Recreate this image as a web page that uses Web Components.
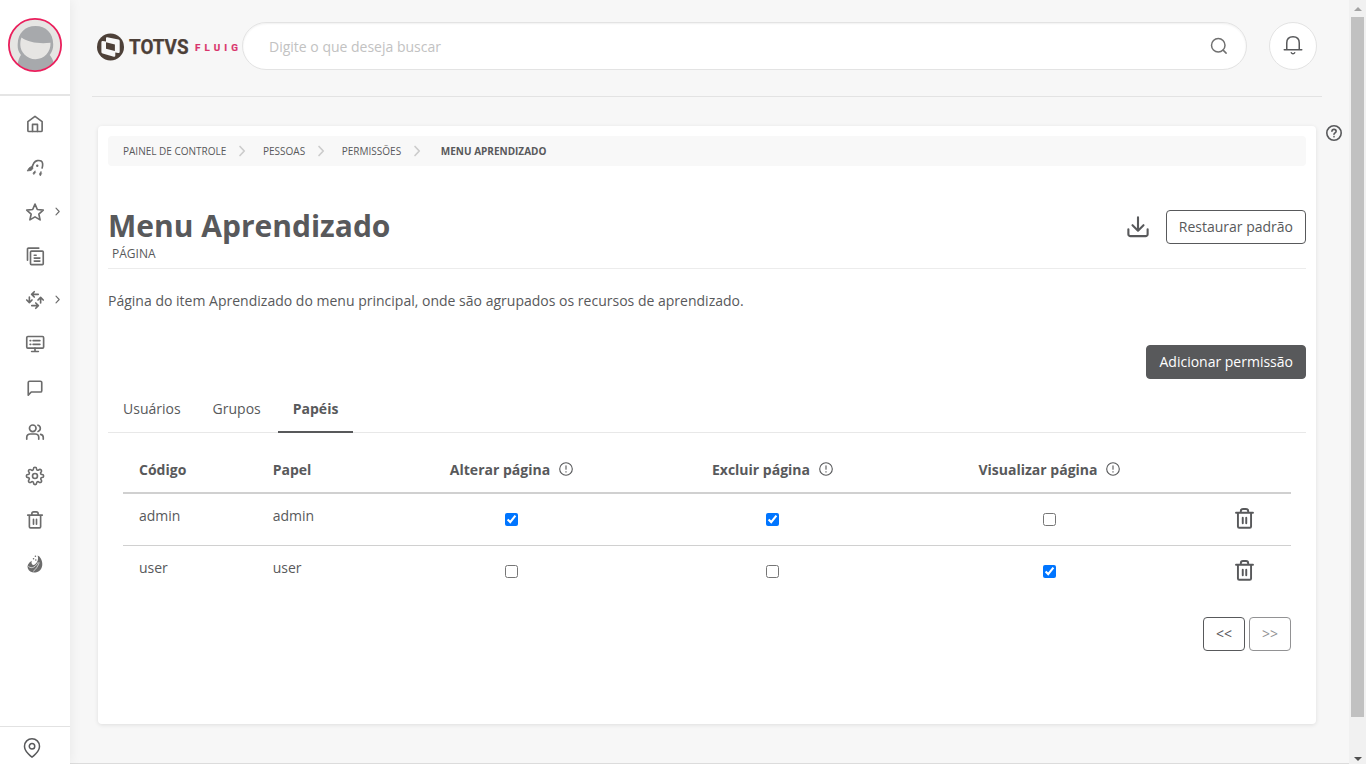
<!DOCTYPE html>
<html lang="pt-BR">
<head>
<meta charset="utf-8">
<title>Menu Aprendizado</title>
<style>
html,body{margin:0;height:100%;overflow:hidden}
body{font:14px/20px "Open Sans","Noto Sans",sans-serif;color:#58595b;background:#f7f7f7}
</style>
</head>
<body>
<fl-app></fl-app>
<script>
const define = (name, css, html) => customElements.define(name, class extends HTMLElement {
  constructor() {
    super();
    this.attachShadow({mode: 'open'}).innerHTML =
      `<style>*{box-sizing:border-box}${css}</style>` + (typeof html === 'function' ? html(this) : html);
  }
});

/* Icons are drawn on a 24-unit grid */
const ICONS = {
  home: '<path d="M2.500 8.800 12 1.800l9.500 7V20.500a1.500 1.500 0 0 1-1.500 1.500H4A1.500 1.500 0 0 1 2.500 20.500z"/><path d="M8.700 22v-9.500h6.600V22"/>',
  rocket: '<path d="M8 12.500C9 7 11 3 15 2.200c4.500-.8 7 .8 7.200 4.300.1 2-.1 3.800-.7 5.500"/><path d="M8 9.500 4.200 11.800 1.500 16l5.500-.8 1.800-2.200z" fill="currentColor" stroke-width="1"/><circle cx="15" cy="9" r="1.600" fill="currentColor" stroke="none"/><path d="m11.800 16-2.600 2.800 1.200 2 2.200-2.600zM19.800 16.800l-2 3.200 1.300 2.700 1.600-3z" fill="currentColor" stroke-width=".8"/>',
  star: '<path d="m12 1.500 3.100 7.200 7.900.8-5.900 5.200 1.700 7.800L12 18.500l-6.800 4 1.700-7.800L1 9.500l7.900-.8z"/>',
  copy: '<path d="M2 17.500V2.800A1.300 1.300 0 0 1 3.300 1.500H17"/><rect x="6" y="5.500" width="17" height="18" rx="1.300"/><path d="M11 11h2.500M11 14.800h7.500M11 18.800h7.500"/>',
  arrows: '<path d="M7.500 4.500h8.800M11 1 7.500 4.500 11 8M19.500 9v7M16 12l3.500-3.500L23 12M16.500 19.500H7.700M13 16l3.500 3.500L13 23M4.500 8v7.500M1 12l3.500 3.500L8 12"/>',
  monitor: '<rect x="1" y="2" width="22.500" height="15.500" rx="1.500"/><path d="M12 17.500V21M7.500 22h9M5.500 7.500h.8M9.500 7.500h9M5.500 12.500h.8M9.500 12.500h9"/>',
  chat: '<path d="M3 21.500V4.800A1.800 1.800 0 0 1 4.800 3h14.400A1.800 1.800 0 0 1 21 4.800v10.700a1.800 1.800 0 0 1-1.800 1.800H7z"/>',
  users: '<g transform="translate(0 .6)"><circle cx="9" cy="6.500" r="4.400"/><path d="M1 21v-2.500a4.500 4.500 0 0 1 4.500-4.500h7a4.500 4.500 0 0 1 4.500 4.500V21M16 2.300a4.400 4.400 0 0 1 0 8.400M19.500 14.500c2.500.6 3.500 2 3.500 4V21"/></g>',
  gear: '<circle cx="12" cy="12" r="3.300"/><path d="M19.400 15a1.650 1.650 0 0 0 .33 1.820l.06.06a2 2 0 1 1-2.830 2.830l-.06-.06a1.650 1.650 0 0 0-2.800 1.170V21a2 2 0 0 1-4 0v-.09a1.650 1.650 0 0 0-2.880-1.260l-.06.06a2 2 0 1 1-2.830-2.830l.06-.06a1.650 1.650 0 0 0-1.170-2.800H3a2 2 0 0 1 0-4h.09a1.650 1.650 0 0 0 1.260-2.880l-.06-.06a2 2 0 1 1 2.830-2.830l.06.06A1.650 1.650 0 0 0 10 3.170V3a2 2 0 0 1 4 0v.09a1.650 1.650 0 0 0 2.800 1.170l.06-.06a2 2 0 1 1 2.830 2.830l-.06.06A1.650 1.650 0 0 0 20.830 10H21a2 2 0 0 1 0 4h-.09a1.650 1.650 0 0 0-1.510 1z" transform="translate(-.6 -.6) scale(1.050)" stroke-width="2"/>',
  trash: '<path d="M2.300 5.500h19.400M4.500 6v15a1.500 1.500 0 0 0 1.500 1.500h12a1.500 1.500 0 0 0 1.500-1.500V6M7.800 5.500V3.700a2.500 2.500 0 0 1 2.500-2.500h3.400a2.500 2.500 0 0 1 2.500 2.500v1.800M10 11v6.500M14 11v6.500"/>',
  flame: '<path d="M7.500 7.500C3 10.500 1 14 2.500 18c1.500 4.500 7 6.500 11.500 5 5.500-1.700 8.700-7 7.500-13.500C20.700 5.500 19 2 15.500.5c1.500 5 .2 8-3 11.500-2.300 2.500-6 1.500-5-4.500z" fill="currentColor" stroke="none"/><path d="M3.500 15.500c4.500 4 10-.5 12.500-5.500M10 21.500c4-3 6-7 7.500-11" stroke="#fff" stroke-width=".9"/><path d="M12.500 1.500h.1M10 5h.1M13 6.500h.1" stroke-width="2"/>',
  pin: '<path d="M12 23S3 16.800 3 9.800a9 9 0 0 1 18 0C21 16.800 12 23 12 23z"/><circle cx="12" cy="10" r="3.300"/>',
  search: '<circle cx="11" cy="11" r="9"/><path d="m17.500 17.500 4 4"/>',
  bell: '<path d="M1.500 17.700h21M4.500 17.500V9.500C4.500 4.800 7.500 2 12 2s7.500 2.800 7.500 7.500v8"/><path d="M10 21.300c.8 1.400 3.200 1.400 4 0"/>',
  help: '<circle cx="12" cy="12" r="10.800"/><path d="M8.900 9.400C9 7.300 10.400 6.500 12 6.500c1.800 0 3.200 1.100 3.200 2.700 0 2.500-3.200 2.500-3.200 4.800M12 17.500v.3"/>',
  down: '<path d="M1.500 14.500v5.300A2.200 2.200 0 0 0 3.700 22h16.600a2.200 2.200 0 0 0 2.200-2.200v-5.300M12 1.500v14M6 10l6 6 6-6"/>',
  info: '<circle cx="12" cy="12" r="10.800"/><path d="M12 6.500v6M12 16.500v.8"/>',
  next: '<path d="m8 3 8.500 9L8 21"/>'
};
define('fl-icon', ':host{display:inline-block;flex:none;width:var(--s,18px);height:var(--s,18px)}svg{display:block;width:100%;height:100%;fill:none;stroke:currentColor;stroke-width:var(--w,2);stroke-linecap:round;stroke-linejoin:round;overflow:visible}',
  e => `<svg viewBox="0 0 24 24">${ICONS[e.getAttribute('name')]}</svg>`);

define('fl-avatar', ':host{display:block;width:54px;height:54px}svg{display:block}',
  `<svg width="54" height="54" viewBox="0 0 54 54"><defs><clipPath id="c"><circle cx="27" cy="27" r="25.500"/></clipPath></defs>
  <circle cx="27" cy="27" r="26" fill="#e6e5e3"/><g clip-path="url(#c)"><path d="M9 54C9 48 10 41 13 37 10 33 9.500 30 9.700 26 10 15 17 8 27.500 8S45 15 45.200 26c.1 4-.5 7-3.500 11 4 5 5 10 5 17z" fill="#a7a9ac"/><path d="M13.500 19.500c7 5.300 18 6.300 29 5.300C43 34 36 41.200 27.500 41.200S12.300 34 12.300 27c0-3 .2-5 1.200-7.500z" fill="#e6e5e3"/></g><circle cx="27" cy="27" r="26.100" fill="none" stroke="#ea1f5c" stroke-width="1.800"/></svg>`);

define('fl-nav-item', ':host{display:grid;grid-template-columns:26px 18px 9px 9px;align-items:center;height:44px;color:#6c6c6c;--w:2.200}fl-icon{grid-column:2}.n{grid-column:4;--s:9px;--w:3;margin-top:-2px}',
  e => `<fl-icon name="${e.getAttribute('icon')}"></fl-icon>${e.hasAttribute('more') ? '<fl-icon class="n" name="next"></fl-icon>' : ''}`);

define('fl-sidebar', ':host{display:flex;flex-direction:column;background:#fff;box-shadow:0 0 12px rgba(0,0,0,.07);z-index:1}header{height:96px;padding:18px 8px;border-bottom:2px solid #e5e5e5}nav{flex:1;padding-top:6.400px}footer{height:38px;border-top:1px solid #e2e2e2;padding:11px 22px;color:#58595b}footer fl-icon{--s:20px;--w:1.800}',
  '<header><fl-avatar></fl-avatar></header><nav>' +
  ['home','rocket','star','copy','arrows','monitor','chat','users','gear','trash','flame'].map(i =>
    `<fl-nav-item icon="${i}"${i === 'star' || i === 'arrows' ? ' more' : ''}></fl-nav-item>`).join('') +
  '</nav><footer><fl-icon name="pin"></fl-icon></footer>');

define('fl-logo', ':host{display:block;width:141.500px;height:28px;margin-top:2px}svg{display:block;overflow:visible}text{font-family:Roboto,sans-serif;font-weight:700}',
  `<svg width="141" height="28"><circle cx="13.500" cy="14" r="13.500" fill="#4d4038"/>
  <path d="M9 5.200q0-1.200 1.200-1L21.500 6.500q1.200.3 1.200 1.500v10.800q0 1.500-1.500 1.200L18.300 19.500v3q0 1.500-1.500 1.200L5.700 20.600q-1.300-.4-1.300-1.600V9.300q0-1.500 1.400-1.300L9 8.600z" fill="#f7f7f7"/>
  <path d="M9 9.300l8.900 2.200v6.500L9 15.800z" fill="#4d4038"/>
  <text x="32" y="20.800" font-size="19.300" textLength="59.500" lengthAdjust="spacingAndGlyphs" fill="#4d4038" stroke="#4d4038" stroke-width=".25">TOTVS</text><text x="98" y="18" font-size="9.800" textLength="43" fill="#d9346c" stroke="#d9346c" stroke-width=".2">FLUIG</text></svg>`);

define('fl-header', ':host{display:flex;align-items:center;height:97px;margin:0 27px 0 22px;padding:0 5px 5px;border-bottom:1px solid #e3e3e3}.s{display:flex;align-items:center;justify-content:space-between;width:1005px;height:48px;margin-left:3.500px;padding:0 18px 0 26px;border:1px solid #e3e3e3;border-radius:24px;background:#fff;color:#c2c2c2;box-shadow:inset 0 1px 2px rgba(0,0,0,.06)}.s span{padding-top:2px}.s fl-icon{color:#707070;--w:2}.b{display:grid;place-items:center;width:48px;height:48px;margin-left:22px;border:1px solid #e3e3e3;border-radius:50%;background:#fff}.b fl-icon{--s:20px;--w:1.800;margin-top:-1px}',
  '<fl-logo></fl-logo><div class="s"><span>Digite o que deseja buscar</span><fl-icon name="search"></fl-icon></div><div class="b"><fl-icon name="bell"></fl-icon></div>');

define('fl-breadcrumb', ':host{display:flex;align-items:center;height:30px;padding-left:15px;border-radius:4px;background:#f8f8f8;font-size:10px}fl-icon{--s:12px;--w:3.400;color:#ccc;margin:-1px 15px 0 9.700px}.l{margin-right:18px}b{font-weight:700}',
  '<span>PAINEL DE CONTROLE</span><fl-icon name="next"></fl-icon><span>PESSOAS</span><fl-icon name="next"></fl-icon><span>PERMISSÕES</span><fl-icon class="l" name="next"></fl-icon><b>MENU APRENDIZADO</b>');

define('fl-button', ':host{display:inline-flex;align-items:center;justify-content:center;height:34px;padding:0 12px;border:1px solid #58595b;border-radius:4px;background:#fff;white-space:nowrap}:host([primary]){background:#58595b;color:#fff}:host([page]){width:42px;padding:0;}:host([disabled]){opacity:.65}', '<slot></slot>');

define('fl-title', ':host{display:flex;height:103px;padding-top:44px;border-bottom:1px solid #ececec;justify-content:space-between}h1{margin:-1px 0 0;font-size:30px;line-height:33px;font-weight:700}small{display:block;font-size:12px;line-height:17px;margin:3px 0 0 4px}.r{display:flex;align-items:center;height:34px;gap:17px}.r fl-icon{--s:22px;--w:2.300}',
  '<div><h1>Menu Aprendizado</h1><small>PÁGINA</small></div><div class="r"><fl-icon name="down"></fl-icon><fl-button>Restaurar padrão</fl-button></div>');

define('fl-tabs', ':host{display:flex;gap:2px;height:48px;border-bottom:1px solid #e8e8e8}span{height:48px;padding:14px 15px 0}.a{font-weight:700;border-bottom:2px solid #58595b}',
  '<span>Usuários</span><span>Grupos</span><span class="a">Papéis</span>');

const COLS = 'grid-template-columns:133.700px 124.300px 261px 261px 293px 95px;';
define('fl-row', `:host{display:grid;${COLS}height:52px;border-bottom:1px solid #d0d0d0}:host([last]){border:0}.t{padding:12px 16px}.c{display:flex;justify-content:center;padding-top:19px}.c input{width:13px;height:13px;margin:0}.d{display:flex;justify-content:center;padding:14px 0 0 1.400px}.d fl-icon{--s:21px;--w:2.200}`,
  e => {
    const n = e.getAttribute('name'), on = e.getAttribute('on').split(',');
    return `<div class="t">${n}</div><div class="t">${n}</div>` +
      on.map(v => `<div class="c"><input type="checkbox"${v === '1' ? ' checked' : ''}></div>`).join('') +
      '<div class="d"><fl-icon name="trash"></fl-icon></div>';
  });

define('fl-table', `:host{display:block;margin:0 15px}.h{display:grid;${COLS}height:61px;padding-top:27px;border-bottom:2px solid #d0d0d0;font-weight:700}.h span{padding:0 16px}.h .c{display:flex;justify-content:center;gap:9px;padding:0}.h fl-icon{--s:14px;--w:1.900;margin-top:2px}.p{display:flex;justify-content:flex-end;gap:4px;margin-top:19px}`,
  '<div class="h"><span>Código</span><span>Papel</span>' + ['Alterar','Excluir','Visualizar'].map(x => `<div class="c">${x} página<fl-icon name="info"></fl-icon></div>`).join('') +
  '</div><fl-row name="admin" on="1,1,0"></fl-row><fl-row name="user" on="0,0,1" last></fl-row><div class="p"><fl-button page>&lt;&lt;</fl-button><fl-button page disabled>&gt;&gt;</fl-button></div>');

define('fl-card', ':host{display:block;width:1218px;height:598px;padding:10px;background:#fff;border-radius:4px;box-shadow:0 1px 4px rgba(0,0,0,.1)}p{margin:22px 0 34px;height:20px;letter-spacing:.008px}.a{display:flex;justify-content:flex-end;margin-bottom:6px}',
  '<fl-breadcrumb></fl-breadcrumb><fl-title></fl-title><p>Página do item Aprendizado do menu principal, onde são agrupados os recursos de aprendizado.</p><div class="a"><fl-button primary>Adicionar permissão</fl-button></div><fl-tabs></fl-tabs><fl-table></fl-table>');

define('fl-scrollbar', ':host{display:grid;grid-template-rows:17px 700px 1fr;justify-items:center;background:#f1f1f1}i{width:0;height:0;border:4px solid transparent}.u{border-top:0;border-bottom-color:#a3a3a3;margin-top:7px}.t{width:13px;background:#c1c1c1}.d{border-bottom:0;border-top-color:#505050;align-self:end;margin-bottom:3px}',
  '<i class="u"></i><div class="t"></div><i class="d"></i>');

define('fl-app', ':host{display:grid;grid-template-columns:70px 1fr 17px;height:764px}main{border-bottom:1px solid #dcdcdc;min-width:0}.b{display:flex;gap:10px;padding:29px 0 0 28px}.b>fl-icon{--s:16px;--w:2.400;margin-top:-1px}',
  '<fl-sidebar></fl-sidebar><main><fl-header></fl-header><div class="b"><fl-card></fl-card><fl-icon name="help"></fl-icon></div></main><fl-scrollbar></fl-scrollbar>');
</script>
</body>
</html>
